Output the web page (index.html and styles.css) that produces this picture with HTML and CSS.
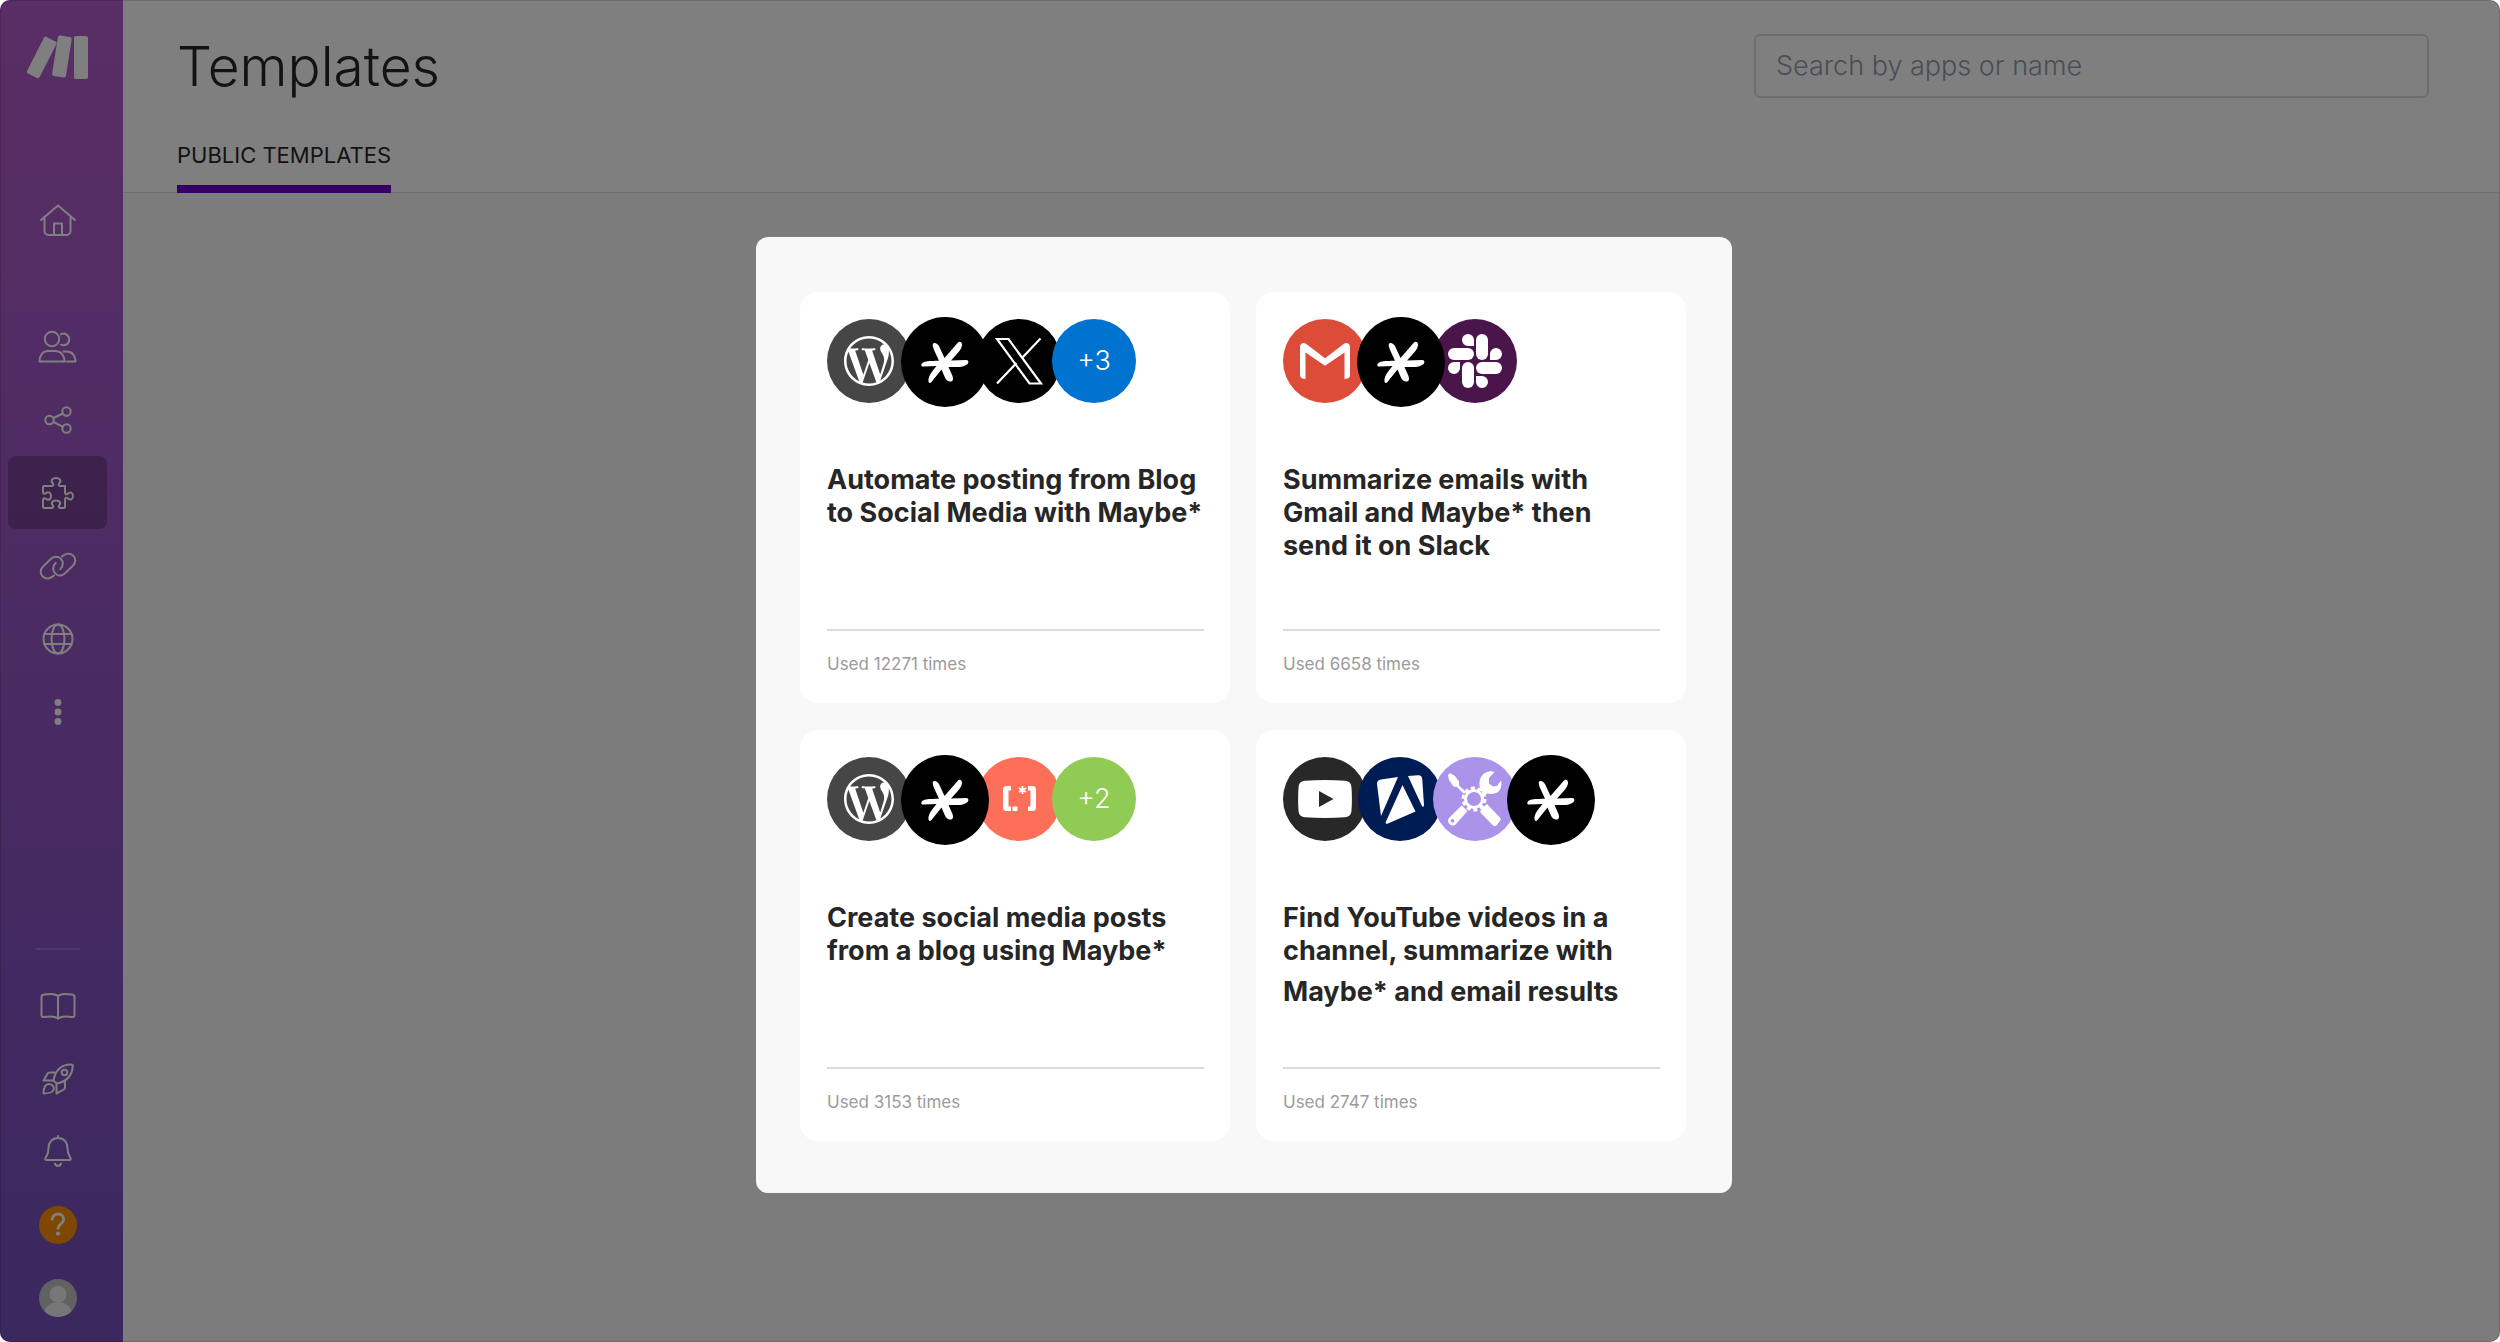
FILE: index.html
```html
<!DOCTYPE html>
<html lang="en">
<head>
  <meta charset="UTF-8">
  <title>Templates</title>
  <meta name="viewport" content="width=device-width, initial-scale=1.0">
  <link rel="stylesheet" href="styles.css">
</head>
<body>
  <!-- shared app icons -->
  <svg class="sprite" aria-hidden="true">
    <symbol id="wordpress" viewBox="0 0 24 24">
      <path d="M21.469 6.825c.84 1.537 1.318 3.3 1.318 5.175 0 3.979-2.156 7.456-5.363 9.325l3.295-9.527c.615-1.54.82-2.771.82-3.864 0-.405-.026-.78-.07-1.11m-7.981.105c.647-.03 1.232-.105 1.232-.105.582-.075.514-.93-.067-.899 0 0-1.755.135-2.88.135-1.064 0-2.85-.15-2.85-.15-.585-.03-.661.855-.075.885 0 0 .54.061 1.125.09l1.68 4.605-2.37 7.08L5.354 6.9c.649-.03 1.234-.1 1.234-.1.585-.075.516-.93-.065-.896 0 0-1.746.138-2.874.138-.2 0-.438-.008-.69-.015C4.911 3.15 8.235 1.215 12 1.215c2.809 0 5.365 1.072 7.286 2.833-.046-.003-.091-.009-.141-.009-1.06 0-1.812.923-1.812 1.914 0 .89.513 1.643 1.06 2.531.411.72.89 1.643.89 2.977 0 .915-.354 1.994-.821 3.479l-1.075 3.585-3.9-11.61zM12 22.784c-1.059 0-2.081-.153-3.048-.437l3.237-9.406 3.315 9.087c.024.053.05.101.078.149-1.12.393-2.325.609-3.582.609M1.211 12c0-1.564.336-3.05.935-4.39L7.29 21.709C3.694 19.96 1.212 16.271 1.211 12M12 0C5.385 0 0 5.385 0 12s5.385 12 12 12 12-5.385 12-12S18.615 0 12 0"/>
    </symbol>
    <symbol id="maybe" viewBox="0 0 48 42">
      <path d="M12 2.500c2-1.500 5 .5 6 2.500l5.500 12L37 1.500c1.500-1.500 4-.5 4 2 0 4-3 7-6 10.500l-5 5.500 15-.5c3 0 3 3 1 4.500-3 2-6 2.500-9 2.500h-9.500l4 9c1 3 .5 5.500-1.500 5.500-3 0-5-1-6.500-5l-3-7-10 12.500c-2 2-3.500.5-3-3 .7-3 2-5.500 4-8l4-5-12.500.5C-.5 26-.5 22.500 2.500 21.200 6 19.800 9 20 18 19.700L13.500 10c-1-2.500-2.300-5.500-1.500-7.500z"/>
    </symbol>
  </svg>

  <div class="app">
    <nav class="sidebar" aria-label="Main">
      <a class="logo" href="#" aria-label="Home page">
        <svg viewBox="0 0 62 44" width="62" height="44" fill="#fff">
          <rect x="-7" y="-20" width="14" height="41" rx="2" transform="translate(15 22) rotate(27)"/>
          <rect x="-7" y="-20" width="14" height="41" rx="2" transform="translate(35 21) rotate(9)"/>
          <rect x="47" y="1" width="14" height="43" rx="2"/>
        </svg>
      </a>
      <div class="nav-group nav-main">
        <a class="nav-item nav-home" href="#" aria-label="Organization">
          <svg viewBox="0 0 40 40"><path d="M3 20 20 5.500 37 20M6.500 17.500V31a4 4 0 0 0 4 4h18a4 4 0 0 0 4-4V17.500M16 35V23.500h8V35"/></svg>
        </a>
        <a class="nav-item" href="#" aria-label="Team">
          <svg viewBox="0 0 40 40"><circle cx="14" cy="12" r="7.200"/><path d="M1.500 34.500c0-6.500 3.500-10.500 8.500-10.500h7c5.500 0 9.500 4 9.500 10.500zM23 7.200a5.800 5.800 0 1 1 0 10.500M25.500 24.500H29c5 0 8.500 4.500 8.500 10h-9"/></svg>
        </a>
        <a class="nav-item" href="#" aria-label="Scenarios">
          <svg viewBox="0 0 40 40"><circle cx="28.500" cy="11.500" r="4.200"/><circle cx="11.500" cy="20" r="4.200"/><circle cx="28.500" cy="28.500" r="4.200"/><path d="m15.500 18 9.500-4.500M15.500 22l9.500 4.800"/></svg>
        </a>
        <a class="nav-item active" href="#" aria-label="Templates">
          <svg viewBox="0 0 40 40"><path d="M6 13h7.500c2 0 2.300-1.500 1.200-2.700-2.800-3 0-5.300 3.300-5.300s6.100 2.300 3.300 5.300c-1.100 1.200-.8 2.700 1.200 2.700h4.500v6.500c0 2 1.500 2.300 2.700 1.200 3-2.800 5.300-.5 5.300 2.300s-2.300 5.100-5.300 2.300c-1.200-1.100-2.700-.8-2.700 1.200v7c0 .8-.7 1.500-1.500 1.500h-3c-2 0-2.300-1.500-1.200-2.700 2.300-3-.3-4.800-3.300-4.800s-5.600 1.800-3.300 4.800c1.100 1.200.8 2.700-1.200 2.700H6.500c-.8 0-1.500-.7-1.500-1.500V27c0-2 1.500-2.300 2.700-1.200 3 2.300 5.300.2 5.300-2.800s-2.300-5.100-5.300-2.800C6.500 21.300 5 21 5 19v-5c0-.6.400-1 1-1z"/></svg>
        </a>
        <a class="nav-item" href="#" aria-label="Connections">
          <svg viewBox="0 0 40 40"><path d="M16 29.500c-3.500 3.500-8 3.800-11 1.200-3.200-2.900-3-7.200.2-10.300l7.300-7.200c3.300-3.200 7.500-3.300 10.300-.4 3 3 2.600 7.200-.5 10.300M24 10.500c3.500-3.400 8-3.700 11-1 3.200 2.900 3 7.200-.2 10.300l-7.300 7.100c-3.300 3.200-7.500 3.300-10.300.5-3-3-2.600-7.300.5-10.400"/></svg>
        </a>
        <a class="nav-item" href="#" aria-label="Webhooks">
          <svg viewBox="0 0 40 40"><circle cx="20" cy="20" r="14.500"/><ellipse cx="20" cy="20" rx="6.500" ry="14.500"/><path d="M6.500 15h27M6.500 25h27"/></svg>
        </a>
        <a class="nav-item" href="#" aria-label="More">
          <svg class="solid" viewBox="0 0 40 40"><circle cx="20" cy="10.500" r="3.400"/><circle cx="20" cy="20" r="3.400"/><circle cx="20" cy="29.500" r="3.400"/></svg>
        </a>
      </div>
      <div class="nav-group nav-bottom">
        <a class="nav-item" href="#" aria-label="Resource hub">
          <svg viewBox="0 0 40 40"><path d="M20 10c-3-2.600-8-2.500-14-1.500-1.800.3-2.500 1-2.500 2.500v18c0 1.700 1 2.200 2.500 2 5-.7 9-.7 12 .5l2 1.200 2-1.200c3-1.200 7-1.200 12-.5 1.500.2 2.500-.3 2.500-2V11c0-1.500-.7-2.200-2.500-2.500-6-1-11-1.100-14 1.500zM20 10v22"/></svg>
        </a>
        <a class="nav-item" href="#" aria-label="What's new">
          <svg viewBox="0 0 40 40"><path d="M15.500 21.500C17 12 23 5 33.500 5.500c1 0 1.300.5 1.200 1.500C34.500 16.500 28 23 18.500 24.500zM17 13.500h-5.500c-1 0-1.500.3-2 1.200L5.500 21.500h10M27 22.500v6c0 1-.3 1.500-1.200 2l-7.300 4v-10M5.500 34.500c0-3.500 0-9.500 5.500-9.500 4 0 5.500 3.500 4.500 6-1.200 3-5 3.500-10 3.500z"/><circle cx="26.500" cy="13.500" r="2.800"/></svg>
        </a>
        <a class="nav-item" href="#" aria-label="Notifications">
          <svg viewBox="0 0 40 40"><path d="M20 4v2c-6 0-9.500 4.500-9.500 10 0 6-1.500 7-2.800 9.500-1.200 2-.2 2.500.8 2.500h23c1 0 2-.5.8-2.500C31 23 29.500 22 29.500 16c0-5.500-3.500-10-9.500-10M17 31.500c.5 3 5.500 3 6 0"/></svg>
        </a>
        <a class="nav-item" href="#" aria-label="Help">
          <span class="help"><svg viewBox="0 0 40 40"><path d="M14 14c0-7.500 12-7.500 12 0 0 5-6 4.500-6 9.500"/><circle class="dot" cx="20" cy="29" r="2.200"/></svg></span>
        </a>
        <a class="nav-item" href="#" aria-label="Profile">
          <svg class="avatar" viewBox="0 0 40 40"><circle cx="20" cy="20" r="20" fill="#c2c2c2"/><circle cx="20" cy="16" r="9" fill="#eee"/><path d="M6 34.200C8 27.500 13 24.500 20 24.500s12 3 14 9.700A20 20 0 0 1 6 34.200z" fill="#eee"/></svg>
        </a>
      </div>
    </nav>

    <main class="content">
      <header class="page-header">
        <div class="title-row">
          <h1>Templates</h1>
          <input class="search" type="search" placeholder="Search by apps or name" aria-label="Search by apps or name">
        </div>
        <div class="tabs">
          <a class="tab" href="#">PUBLIC TEMPLATES</a>
        </div>
      </header>
    </main>
  </div>

  <div class="overlay">
    <section class="modal" role="dialog" aria-label="Public templates">
      <article class="card">
        <div class="apps">
          <span class="app-icon wordpress"><svg width="50" height="50"><use href="#wordpress"/></svg></span>
          <span class="app-icon maybe"><svg width="48" height="42"><use href="#maybe"/></svg></span>
          <span class="app-icon x"><svg viewBox="0 0 48 48" width="48" height="48"><path d="M2 2h11.500L46 46.500H34.500zM45.500 1.500 27 21M2 46.500 21.500 26" fill="none" stroke="#fff" stroke-width="2.200"/></svg></span>
          <span class="app-icon more-blue">+3</span>
        </div>
        <h2>Automate posting from Blog to Social Media with Maybe*</h2>
        <p class="used">Used 12271 times</p>
      </article>

      <article class="card">
        <div class="apps">
          <span class="app-icon gmail"><svg viewBox="0 0 50 36" width="50" height="36"><path d="M5.500 36C2 36 0 34.500 0 32V4c0-3.600 3.500-5 6-3.200L25 15.200 44 .8C46.500-1 50 .4 50 4v28c0 2.500-2 4-5.500 4V9.500L25 22.800 5.500 9.500z"/></svg></span>
          <span class="app-icon maybe"><svg width="48" height="42"><use href="#maybe"/></svg></span>
          <span class="app-icon slack"><svg viewBox="0 0 54 54" width="54" height="54"><rect x="0" y="14" width="26" height="12" rx="6"/><rect x="28" y="0" width="12" height="26" rx="6"/><rect x="28" y="28" width="26" height="12" rx="6"/><rect x="14" y="28" width="12" height="26" rx="6"/><path d="M26 12h-6a6 6 0 1 1 6-6zM42 26v-6a6 6 0 1 1 6 6zM28 42h6a6 6 0 1 1-6 6zM12 28v6a6 6 0 1 1-6-6z"/></svg></span>
        </div>
        <h2>Summarize emails with Gmail and Maybe* then send it on Slack</h2>
        <p class="used">Used 6658 times</p>
      </article>

      <article class="card">
        <div class="apps">
          <span class="app-icon wordpress"><svg width="50" height="50"><use href="#wordpress"/></svg></span>
          <span class="app-icon maybe"><svg width="48" height="42"><use href="#maybe"/></svg></span>
          <span class="app-icon parser"><svg viewBox="0 0 34 28" width="34" height="28"><path d="M9 1v4.500H6.500v16H9V26H4.500Q1 26 1 22.500v-18Q1 1 4.500 1zM26 1h4.500Q34 1 34 4.500v18q0 3.500-3.500 3.500H26v-4.500h2.500v-16H26zM10.500 21.500h5V26h-5z"/><path d="M20.500 1v8M17 3l7 4M24 3l-7 4" stroke="#fff" stroke-width="1.800"/></svg></span>
          <span class="app-icon more-green">+2</span>
        </div>
        <h2>Create social media posts from a blog using Maybe*</h2>
        <p class="used">Used 3153 times</p>
      </article>

      <article class="card">
        <div class="apps">
          <span class="app-icon youtube"><svg viewBox="0 0 54 38" width="54" height="38"><path d="M7 .8Q27-.8 47 .8c4.500.4 6.200 2.500 6.500 7q.8 11 0 22.400c-.3 4.500-2 6.600-6.500 7q-20 1.600-40 0c-4.500-.4-6.200-2.500-6.500-7q-.8-11.400 0-22.400C.8 3.300 2.500 1.200 7 .8zM21 11v16l14.500-8z" fill-rule="evenodd"/></svg></span>
          <span class="app-icon apify"><svg viewBox="0 0 48 50" width="48" height="50"><path d="M5 5.500 22 3 5 42 1 10C.8 7.500 2.500 5.800 5 5.500zM32 2l10-.8c2.500-.2 4 1 4.200 3.500L48 31c0 2-1.500 2.500-2.300.5zM26.500 11 39.500 37.500 12 49.500c-2 .8-2.800-.4-2-2z"/></svg></span>
          <span class="app-icon tools"><svg viewBox="0 0 54 56" width="54" height="56">
            <circle cx="26" cy="28" r="8.500" fill="none" stroke="#fff" stroke-width="3"/>
            <circle cx="26" cy="28" r="11" fill="none" stroke="#fff" stroke-width="3" stroke-dasharray="4 2.910"/>
            <path d="M2 2 7 5l4 5.500v4L18 21l-2 2-7-7-3.500-.5L1 9 0 4zM32 17c-1-4-1-9 2.500-13 3.500-3.500 8-4.500 12-3L41 7v5.500l4 3 4-.5 4-5.500c1.500 6-1 11-5 12.500-4 1.500-7 1-9 .5L36 25.500z"/>
            <path d="m34 37 5-4 12.500 13c1.500 1.500 1.500 3 0 4.500L49 54c-1.500 1.500-3 1.500-4.500 0L32 41zM13.500 34.500l6 5.500L8 53c-2 2-4.500 2-6.500 0s-2-4.500 0-6.500zM4.500 48a1.800 1.800 0 1 0 .1 0z" fill-rule="evenodd"/></svg></span>
          <span class="app-icon maybe"><svg width="48" height="42"><use href="#maybe"/></svg></span>
        </div>
        <h2>Find YouTube videos in a channel, summarize with <span class="tail">Maybe* and email results</span></h2>
        <p class="used">Used 2747 times</p>
      </article>
    </section>
  </div>
</body>
</html>
```
FILE: styles.css
```css
* {
  box-sizing: border-box;
}
body {
  margin: 0;
  background: #fff;
  color: #262626;
  font-family: Inter, Arial, sans-serif;
}
a {
  color: inherit;
  text-decoration: none;
}
.sprite {
  position: absolute;
  width: 0;
  height: 0;
}

/* page */
.app {
  display: flex;
  min-height: 100vh;
  border-radius: 10px;
  overflow: hidden;
  background: #f8f8f8;
}
.content {
  flex: 1;
}
.page-header {
  background: #fff;
  border-bottom: 1px solid #dcdcdc;
  padding: 34px 71px 0 54px;
}
.title-row {
  display: flex;
  align-items: center;
  justify-content: space-between;
}
h1 {
  margin: 0;
  font-size: 55px;
  font-weight: 300;
  line-height: 64px;
}
.search {
  width: 675px;
  height: 64px;
  padding: 0 20px 2px;
  border: 2px solid #dcdcdc;
  border-radius: 6px;
  background: #fff;
  font-family: inherit;
  font-size: 27px;
  font-weight: 300;
}
.search::placeholder {
  color: #929cae;
}
.tabs {
  display: flex;
  margin-bottom: -1px;
}
.tab {
  padding: 41px 0 14px;
  border-bottom: 8px solid #6800c8;
  font-size: 22px;
  line-height: 32px;
}

/* sidebar */
.sidebar {
  display: flex;
  flex-direction: column;
  width: 123px;
  padding: 35px 16px 8px 8px;
  background: linear-gradient(#b45ccc, #7450be);
}
.logo {
  display: flex;
  padding-left: 19px;
}
.nav-group {
  display: flex;
  flex-direction: column;
}
.nav-item {
  display: flex;
  align-items: center;
  justify-content: center;
  height: 73px;
  border-radius: 8px;
}
.nav-item svg {
  width: 40px;
  height: 40px;
  fill: none;
  stroke: #fff;
  stroke-width: 2;
  stroke-linecap: round;
  stroke-linejoin: round;
}
.nav-item.active {
  background: rgba(0, 0, 0, 0.22);
}
.nav-main {
  padding-top: 104px;
}
.nav-home {
  margin-bottom: 54px;
}
.nav-item .solid {
  fill: #fff;
  stroke: none;
}
.nav-bottom {
  margin-top: auto;
}
.nav-bottom::before {
  content: "";
  width: 44px;
  height: 2px;
  margin: 0 auto 19px;
  background: rgba(255, 255, 255, 0.2);
}
.help {
  display: flex;
  width: 38px;
  height: 38px;
  border-radius: 50%;
  background: #ff9000;
}
.help svg {
  width: 38px;
  height: 38px;
  stroke-width: 3;
}
.help .dot {
  fill: #fff;
  stroke: none;
}
.nav-item .avatar {
  width: 38px;
  height: 38px;
  stroke: none;
}

/* modal */
.overlay {
  position: absolute;
  inset: 0;
  display: flex;
  align-items: flex-start;
  justify-content: center;
  padding: 236px 12px 0 0;
  border: 1px solid rgba(0, 0, 0, 0.14);
  border-radius: 10px;
  background: rgba(0, 0, 0, 0.5);
}
.modal {
  display: grid;
  grid-template-columns: 1fr 1fr;
  gap: 27px 26px;
  width: 976px;
  padding: 55px 46px 52px 44px;
  border-radius: 12px;
  background: #f8f8f8;
}
.card {
  display: flex;
  flex-direction: column;
  min-height: 411px;
  padding: 27px 26px 27px 27px;
  border-radius: 18px;
  background: #fff;
}
.apps {
  display: grid;
  grid-auto-flow: column;
  grid-auto-columns: 75px;
  height: 84px;
}
.app-icon {
  display: flex;
  align-items: center;
  justify-content: center;
  width: 84px;
  height: 84px;
  border-radius: 50%;
  color: #fff;
  font-size: 27px;
  font-weight: 300;
}
.app-icon svg {
  fill: #fff;
}
.wordpress {
  background: #464646;
}
.maybe {
  z-index: 1;
  width: 88px;
  height: 90px;
  margin: -2px 0 0 -1px;
  background: #000;
}
.x {
  background: #000;
}
.gmail {
  background: #dd4b39;
}
.slack {
  background: #4a154b;
}
.parser {
  background: #fd6f58;
}
.youtube {
  background: #282828;
}
.apify {
  background: #001c54;
}
.tools {
  background: #ab93ea;
}
.more-blue,
.more-green {
  z-index: 1;
  padding-bottom: 2px;
}
.more-blue {
  background: #0073d1;
}
.more-green {
  background: #90cc55;
}
h2 {
  flex: 1;
  margin: 0;
  padding-top: 60px;
  font-size: 27px;
  font-weight: 700;
  line-height: 33px;
}
.tail {
  display: block;
  margin-top: 8px;
}
.used {
  margin: 0;
  padding-top: 21px;
  border-top: 2px solid #dcdcdc;
  color: #9b9b9b;
  font-size: 17px;
  line-height: 24px;
}
```
